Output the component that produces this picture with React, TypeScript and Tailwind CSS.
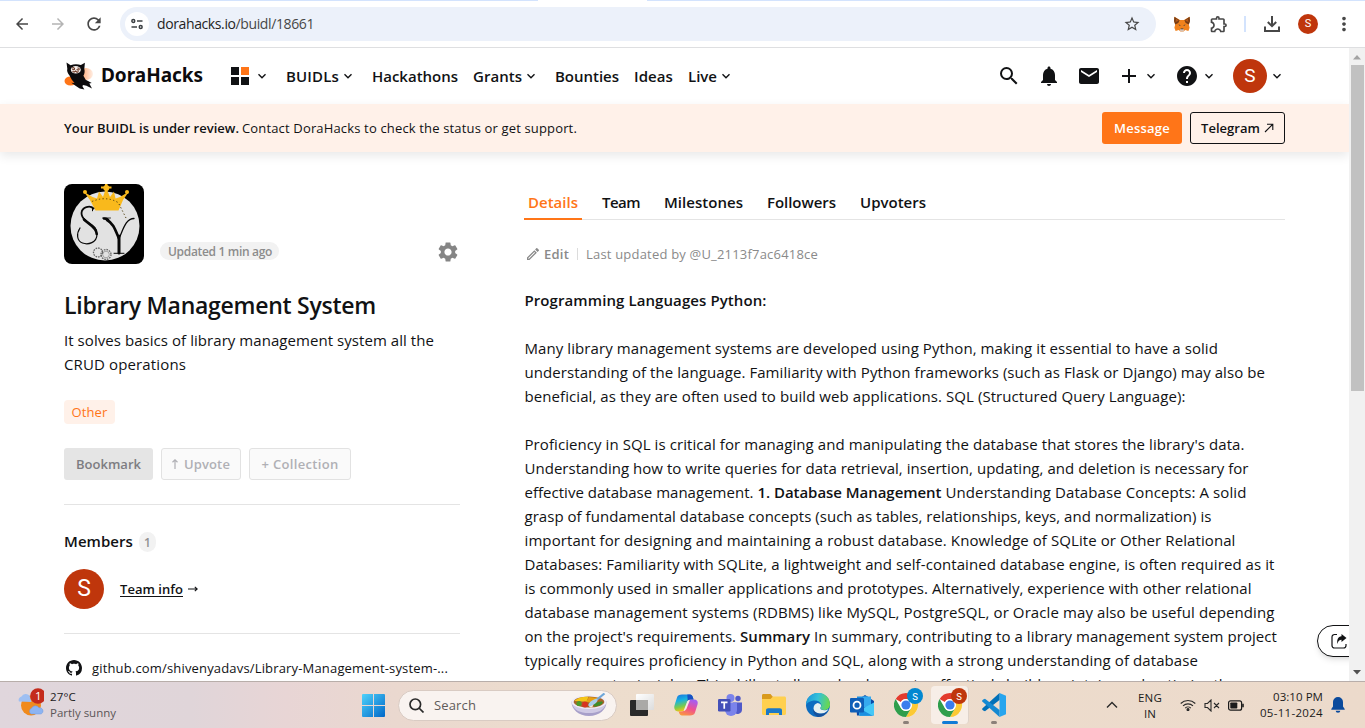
import { useLayoutEffect, useRef, useState } from "react";
import type { ReactNode } from "react";
import {
  MdAdd,
  MdArrowBack,
  MdArrowForward,
  MdHelp,
  MdMail,
  MdMoreVert,
  MdNotifications,
  MdOutlineEdit,
  MdOutlineExtension,
  MdRefresh,
  MdSearch,
  MdSettings,
  MdStarBorder,
} from "react-icons/md";

/* Single line of text, tracked so that it fills the given width. */
function Fit({ w, className = "", children }: { w: number; className?: string; children: ReactNode }) {
  const ref = useRef<HTMLSpanElement>(null);
  const [spacing, setSpacing] = useState(0);
  useLayoutEffect(() => {
    const el = ref.current;
    if (!el) return;
    const count = (el.textContent || "").length;
    setSpacing((w - el.getBoundingClientRect().width) / Math.max(1, count));
  }, [w]);
  return (
    <span className={`block shrink-0 whitespace-nowrap ${className}`} style={{ width: w }}>
      <span ref={ref} className="inline-block" style={{ letterSpacing: `${spacing}px` }}>
        {children}
      </span>
    </span>
  );
}

function Chevron({ className = "" }: { className?: string }) {
  return (
    <svg viewBox="0 0 12 12" className={`size-3 shrink-0 ${className}`} fill="none" stroke="#111214" strokeWidth="1.4">
      <path d="M2.5 4.2 6 7.700l3.500-3.500" />
    </svg>
  );
}

function Avatar({ className }: { className: string }) {
  return (
    <span className={`flex shrink-0 items-center justify-center rounded-full bg-[#bf360c] font-['Roboto',sans-serif] text-white ${className}`}>
      S
    </span>
  );
}

function Fox() {
  return (
    <svg viewBox="0 0 16 16" className="size-4 shrink-0">
      <path d="M.4.8 6 4h4L15.600.8 16 5l-1.200 3.500.8 3.200-1.200 3.200-3.200-.8L9.500 15.500h-3l-1.700-1.400-3.200.8L.4 11.700l.8-3.200L0 5z" fill="#f0821d" />
      <path d="M.4.8 5.600 4.300 4.300 7 1.200 8.500 0 5zM15.600.8l-5.200 3.500L11.700 7l3.100 1.500L16 5z" fill="#763d16" />
      <path d="m2 2.500 2.800 2.200L1.500 6zM14 2.500l-2.800 2.200L14.500 6z" fill="#b5591b" />
      <path d="m4.300 8.200 2.200 1-.5.800zM11.700 8.200l-2.200 1 .5.800z" fill="#233447" />
      <path d="M6.300 13h3.400l.3 1.600-.6.900H6.600l-.6-.9z" fill="#d7c1b3" />
      <path d="M6.800 12.400h2.400l.3.900h-3z" fill="#233447" />
    </svg>
  );
}

function BrowserBar() {
  return (
    <div className="flex h-12 flex-col border-b border-[#dedfe1] bg-white">
      <div className="flex h-px shrink-0 bg-[#d3e3fd] pl-[538px]">
        <div className="w-[109px] bg-white" />
      </div>
      <div className="flex h-[46px] items-center text-[#474747]">
        <MdArrowBack className="ml-[13px] size-[18px]" />
        <MdArrowForward className="ml-[18px] size-[18px] text-[#b4b4b4]" />
        <MdRefresh className="ml-[17px] size-5" />
        <div className="ml-4 flex h-[34px] w-[1036px] items-center rounded-full bg-[#ecf1fa] pl-[5px]">
          <span className="flex size-6 items-center justify-center rounded-full bg-white">
            <svg viewBox="0 0 12 12" className="size-3" fill="none" stroke="#3c4043" strokeWidth="1.500">
              <circle cx="2.300" cy="3" r="1.450" />
              <circle cx="9.700" cy="9" r="1.450" />
              <path d="M6 3h5.500M.5 9H6" />
            </svg>
          </span>
          <Fit w={157} className="ml-2 text-[14px] leading-5 text-[#474747]">
            <span className="text-[#1f1f1f]">dorahacks.io</span>/buidl/18661
          </Fit>
          <MdStarBorder className="ml-auto mr-[15px] size-[18px]" />
        </div>
        <span className="ml-[18px]">
          <Fox />
        </span>
        <MdOutlineExtension className="ml-[19px] size-5" />
        <span className="ml-[15px] h-4 w-0.5 bg-[#d3e3fd]" />
        <svg viewBox="0 0 18 18" className="ml-[17px] size-[18px]" fill="none" stroke="#474747" strokeWidth="2">
          <path d="M9 1v10M4.800 7 9 11.200 13.200 7M2 11.500V16h14v-4.500" />
        </svg>
        <Avatar className="ml-[17px] size-5 text-[11px]" />
        <MdMoreVert className="ml-[15px] size-[22px]" />
      </div>
    </div>
  );
}

function DoraLogo() {
  return (
    <svg viewBox="0 0 30 30" className="size-[30px] shrink-0">
      <defs>
        <linearGradient id="glow" x1="0" x2="1">
          <stop offset="0" stopColor="#ff7a2a" stopOpacity=".75" />
          <stop offset="1" stopColor="#ff7a2a" stopOpacity=".12" />
        </linearGradient>
      </defs>
      <ellipse cx="22" cy="13" rx="7" ry="6" fill="url(#glow)" />
      <ellipse cx="6.500" cy="20" rx="6" ry="4.600" fill="#ff7518" />
      <path d="M2.500 1.500 6.600 4.200c3.300-1.400 7.200-1.400 10.300-.1L20.900 1.700l-.6 6.300c.7 2.200.3 4.700-.9 6.800l2.300 3.900 6 3.300-2.400.6 2.700 4.900-5.500-2.800-3.600-.8-.4 1.700 1.900 3-4.700-1.100-3.800-2.600-4.600-3.100 3.200.1-2.700-3.100-2.300-4.300C3.600 11.800 2.700 10 3.300 7.700z" fill="#0c0b0d" />
      <ellipse cx="11.800" cy="8.800" rx="5" ry="3.700" fill="#f6efec" />
      <path d="M8 7.200c1-1 2.500-.6 2.600.5s-1.600 1.300-2.200.5M13.500 7.300c1-.7 2.300.3 1.500 1.300s-2 .3-2-.5M8.500 10.300l1.500.9 1.700-1.200 1.400 1.300 1.500-.8" fill="none" stroke="#6d3a26" strokeWidth="1.100" />
    </svg>
  );
}

function SiteHeader() {
  const nav = "-mt-px text-[15px] leading-6 font-semibold";
  return (
    <header className="flex h-14 items-center bg-white pl-16 text-[#111214]">
      <DoraLogo />
      <Fit w={102} className="-mt-0.5 ml-[7px] font-['Noto_Sans',sans-serif] text-[19px] leading-6 font-bold text-[#0c0b0d]">
        DoraHacks
      </Fit>
      <span className="ml-7 grid grid-cols-2 gap-0.5">
        <i className="size-2 bg-[#111214]" />
        <i className="size-2 bg-[#ff7518]" />
        <i className="size-2 bg-[#111214]" />
        <i className="size-2 bg-[#111214]" />
      </span>
      <Chevron className="ml-[7px]" />
      <Fit w={53} className={`ml-[18px] ${nav}`}>BUIDLs</Fit>
      <Chevron className="ml-[3px]" />
      <Fit w={86} className={`ml-[18px] ${nav}`}>Hackathons</Fit>
      <Fit w={49} className={`ml-[15px] ${nav}`}>Grants</Fit>
      <Chevron className="ml-[3px]" />
      <Fit w={64} className={`ml-[18px] ${nav}`}>Bounties</Fit>
      <Fit w={39} className={`ml-[15px] ${nav}`}>Ideas</Fit>
      <Fit w={29} className={`ml-[15px] ${nav}`}>Live</Fit>
      <Chevron className="ml-[3px]" />
      <div className="ml-auto flex items-center pr-[66px]">
        <MdSearch className="size-6" />
        <MdNotifications className="ml-4 size-6" />
        <MdMail className="ml-4 size-6" />
        <MdAdd className="ml-4 size-6" />
        <Chevron className="ml-1" />
        <MdHelp className="ml-[18px] size-6" />
        <Chevron className="ml-1" />
        <Avatar className="ml-[18px] size-[34px] text-[19px]" />
        <Chevron className="ml-1" />
      </div>
    </header>
  );
}

function ReviewBanner() {
  return (
    <div className="z-10 flex h-12 items-center bg-[#fff1e9] pl-16 text-[13px] text-[#111214] shadow-[0_4px_10px_rgba(0,0,0,0.09)]">
      <Fit w={175} className="pt-0.5 font-semibold">Your BUIDL is under review.</Fit>
      <Fit w={335} className="ml-[3px] pt-0.5">Contact DoraHacks to check the status or get support.</Fit>
      <div className="ml-auto flex gap-2 pr-16 font-semibold">
        <button className="flex h-8 w-20 items-center justify-center rounded-[3px] bg-[#ff7518] text-white">
          <Fit w={56} className="pt-px font-semibold">Message</Fit>
        </button>
        <button className="flex h-8 w-[95px] items-center justify-center rounded-[3px] border border-[#111214]">
          <Fit w={59} className="pt-px font-semibold">Telegram</Fit>
          <svg viewBox="0 0 10 10" className="ml-1 size-2.5" fill="none" stroke="#111214" strokeWidth="1.100">
            <path d="M1 9 8.500 1.500M3 1.300h5.800V7" />
          </svg>
        </button>
      </div>
    </div>
  );
}

function ProjectLogo() {
  return (
    <svg viewBox="0 0 80 80" className="size-20 rounded-lg">
      <rect width="80" height="80" fill="#000" />
      <circle cx="41" cy="42" r="34.500" fill="#e2e2e2" />
      <path d="M31.500 26.500 26 16 19.500 7.500l9 5.500 4.500 1.500 2-7 4 5.500 2-6V4.500h-4V2.500h4V0h2.500v2.500h4v2h-4V7l2.500 6 4-5.500 1.500 7 4.500-1.500L65 7.500 59 16 54.500 26.500z" fill="#f9b91c" />
      <circle cx="21" cy="8" r="2" fill="#f9b91c" />
      <circle cx="63" cy="8" r="2" fill="#f9b91c" />
      <circle cx="42.300" cy="4" r="3" fill="#f9b91c" />
      <path d="M28 17.500q14-6 26 1M55 20l8 16" fill="none" stroke="#51400f" strokeWidth="1" strokeDasharray="1.300 2.300" />
      <g fill="none" stroke="#080808" strokeLinecap="round">
        <path d="M29.500 24.500C26 21 18 23 17.500 29c0 3 1 5 4 7.500" strokeWidth="1.800" />
        <path d="M19.500 34.500c5 5.500 13.700 7.500 13.500 15.500 0 9-9 11-14.500 9-5.500-2-6.500-9-2.500-15" strokeWidth="1.200" />
        <path d="M20 35.500c5 5 12.700 7.500 12.700 14.500" strokeWidth="2.600" />
        <path d="M28.500 23.300v3.500" strokeWidth="1" />
        <path d="M43 36c6 3 8 9 11.700 18M40 34.500q4 0 5 3" strokeWidth="2.600" />
        <path d="M70 34.500c-8 0-10.500 10-15 20" strokeWidth="1.300" />
        <path d="M55 52v17" strokeWidth="3" />
        <path d="M50 69.300h10" strokeWidth="1" />
        <path d="M38.500 34h8" strokeWidth=".8" />
      </g>
      <g fill="none" stroke="#666" strokeWidth="1.300" strokeDasharray="1.600 1">
        <circle cx="34" cy="68.500" r="4.500" />
        <circle cx="42" cy="70.500" r="5" />
      </g>
      <circle cx="42" cy="70.500" r="3.300" fill="none" stroke="#888" strokeWidth=".7" />
    </svg>
  );
}

function Sidebar() {
  return (
    <aside className="flex w-[396px] shrink-0 flex-col">
      <div className="flex items-end">
        <ProjectLogo />
        <span className="mb-1 ml-4 flex h-[18px] w-[119px] items-center rounded-full bg-[#f2f2f2] pl-2 text-[12px] leading-[18px] font-semibold text-[#8c8c8c]">
          <Fit w={104} className="pt-0.5">Updated 1 min ago</Fit>
        </span>
        <MdSettings className="ml-auto size-6 text-[#858585]" />
      </div>
      <h1 className="mt-[23px] h-9 text-[23px] leading-9 font-semibold">
        <Fit w={312}>Library Management System</Fit>
      </h1>
      <div className="mt-[5px] text-[15px] leading-6">
        <Fit w={370}>It solves basics of library management system all the</Fit>
        <Fit w={122}>CRUD operations</Fit>
      </div>
      <span className="mt-6 flex h-6 w-[51px] items-center justify-center rounded bg-[#fff1e9] text-[13px] text-[#ff7518]">
        <Fit w={36} className="pt-px">Other</Fit>
      </span>
      <div className="mt-6 flex gap-2 text-[13px] font-semibold">
        <span className="flex h-8 w-[89px] items-center justify-center rounded-[3px] bg-[#e5e5e5] text-[#7d7d82]">
          <Fit w={65} className="pt-0.5">Bookmark</Fit>
        </span>
        <span className="flex h-8 w-20 items-center justify-center rounded-[3px] border border-[#e2e2e2] bg-[#fafafa] text-[#b0b0b5]">
          <svg viewBox="0 0 6 10" className="mr-1.5 h-2.5 w-1.5" fill="none" stroke="#b0b0b5" strokeWidth="1.200">
            <path d="M3 10V1M.5 3.200 3 .8l2.500 2.400" />
          </svg>
          <Fit w={46} className="pt-0.5">Upvote</Fit>
        </span>
        <span className="flex h-8 w-[102px] items-center justify-center rounded-[3px] border border-[#e2e2e2] bg-[#fafafa] text-[#b0b0b5]">
          <Fit w={77} className="pt-0.5">+ Collection</Fit>
        </span>
      </div>
      <hr className="mt-6 border-[#e4e4e4]" />
      <div className="mt-[27px] flex h-5 items-center">
        <Fit w={69} className="-mt-0.5 text-[15px] font-semibold">Members</Fit>
        <span className="ml-1.5 flex h-5 w-[17px] items-center justify-center rounded-full bg-[#f2f2f2] pt-px text-[12px] font-semibold text-[#909090]">1</span>
      </div>
      <div className="mt-[17px] flex items-center">
        <Avatar className="size-10 text-[23px]" />
        <Fit w={63} className="ml-4 text-[13px] leading-5 font-semibold">
          <span className="underline decoration-1 underline-offset-2">Team info</span>
        </Fit>
        <svg viewBox="0 0 10 6" className="ml-[5px] h-1.5 w-2.5 shrink-0" fill="none" stroke="#111214" strokeWidth="1.100">
          <path d="M0 3h9M6.800.8 9.200 3 6.800 5.200" />
        </svg>
      </div>
      <hr className="mt-6 border-[#e4e4e4]" />
      <div className="mt-6 flex items-center pl-0.5">
        <svg viewBox="0 0 16 16" className="size-4 shrink-0" fill="#111214">
          <path d="M8 0C3.580 0 0 3.580 0 8c0 3.540 2.290 6.530 5.470 7.590.4.070.55-.17.55-.38 0-.19-.01-.82-.01-1.490-2.010.37-2.530-.49-2.690-.94-.09-.23-.48-.94-.82-1.130-.28-.15-.68-.52-.01-.53.63-.01 1.080.58 1.230.82.72 1.210 1.870.87 2.330.66.07-.52.28-.87.51-1.070-1.780-.2-3.640-.89-3.640-3.950 0-.87.31-1.590.82-2.150-.08-.2-.36-1.020.08-2.120 0 0 .67-.21 2.200.82.64-.18 1.320-.27 2-.27s1.360.09 2 .27c1.530-1.040 2.200-.82 2.200-.82.44 1.100.16 1.920.08 2.120.51.56.82 1.270.82 2.150 0 3.070-1.870 3.750-3.650 3.950.29.25.54.73.54 1.480 0 1.070-.01 1.930-.01 2.200 0 .21.15.46.55.38A8.010 8.010 0 0016 8c0-4.420-3.580-8-8-8z" />
        </svg>
        <Fit w={356} className="ml-2.5 text-[13px] leading-5">
          github.com/shivenyadavs/Library-Management-system-...
        </Fit>
      </div>
    </aside>
  );
}

const TABS = [
  { label: "Team", w: 38, gap: "ml-[15px]" },
  { label: "Milestones", w: 79, gap: "ml-3.5" },
  { label: "Followers", w: 69, gap: "ml-3.5" },
  { label: "Upvoters", w: 66, gap: "ml-3.5" },
];

function Details() {
  return (
    <main className="ml-16 w-[761px] shrink-0">
      <div className="flex h-9 border-b border-[#e4e4e4] text-[15px] leading-6 font-semibold">
        <span className="z-10 h-9 w-[58px] border-b-2 border-[#ff7518] px-1 pt-1.5 text-[#ff7518]">
          <Fit w={50}>Details</Fit>
        </span>
        {TABS.map((t) => (
          <span key={t.label} className={`px-[5px] pt-1.5 ${t.gap}`}>
            <Fit w={t.w}>{t.label}</Fit>
          </span>
        ))}
      </div>
      <div className="mt-6 flex h-5 items-center text-[13px] leading-5 text-[#8a8a8a]">
        <MdOutlineEdit className="ml-[1px] size-4" />
        <Fit w={25} className="ml-[3px] font-semibold">Edit</Fit>
        <span className="ml-2 h-3 w-px bg-[#dcdcdc]" />
        <Fit w={232} className="ml-2">Last updated by @U_2113f7ac6418ce</Fit>
      </div>
      <div className="mt-6 pl-[0.5px] text-[15px] leading-6">
        <Fit w={242} className="font-semibold">Programming Languages Python:</Fit>
        <div className="mt-6">
          <Fit w={693.5}>Many library management systems are developed using Python, making it essential to have a solid</Fit>
          <Fit w={740.5}>understanding of the language. Familiarity with Python frameworks (such as Flask or Django) may also be</Fit>
          <Fit w={661}>beneficial, as they are often used to build web applications. SQL (Structured Query Language):</Fit>
        </div>
        <div className="mt-6">
          <Fit w={720}>Proficiency in SQL is critical for managing and manipulating the database that stores the library's data.</Fit>
          <Fit w={724}>Understanding how to write queries for data retrieval, insertion, updating, and deletion is necessary for</Fit>
          <div className="flex">
            <Fit w={229}>effective database management.</Fit>
            <Fit w={184} className="ml-1 font-semibold">1. Database Management</Fit>
            <Fit w={301} className="ml-1">Understanding Database Concepts: A solid</Fit>
          </div>
          <Fit w={687}>grasp of fundamental database concepts (such as tables, relationships, keys, and normalization) is</Fit>
          <Fit w={711}>important for designing and maintaining a robust database. Knowledge of SQLite or Other Relational</Fit>
          <Fit w={750}>Databases: Familiarity with SQLite, a lightweight and self-contained database engine, is often required as it</Fit>
          <Fit w={727}>is commonly used in smaller applications and prototypes. Alternatively, experience with other relational</Fit>
          <Fit w={750}>database management systems (RDBMS) like MySQL, PostgreSQL, or Oracle may also be useful depending</Fit>
          <div className="flex">
            <Fit w={211.5}>on the project's requirements.</Fit>
            <Fit w={70} className="ml-1 font-semibold">Summary</Fit>
            <Fit w={463} className="ml-1">In summary, contributing to a library management system project</Fit>
          </div>
          <Fit w={673.5}>typically requires proficiency in Python and SQL, along with a strong understanding of database</Fit>
          <Fit w={712}>management principles. This skill set allows developers to effectively build, maintain, and optimize the</Fit>
        </div>
      </div>
    </main>
  );
}

function ScrollTrack() {
  return (
    <div className="flex w-4 shrink-0 flex-col items-center bg-[#f1f1f1]">
      <svg viewBox="0 0 16 17" className="h-[17px] w-4" fill="#a3a3a3">
        <path d="M8 7l4 4.500H4z" />
      </svg>
      <div className="ml-px h-[326px] w-[13px] bg-[#c1c1c1]" />
      <svg viewBox="0 0 16 17" className="mt-auto h-[17px] w-4" fill="#505050">
        <path d="M8 10.500 4 6h8z" />
      </svg>
    </div>
  );
}

function Bowl() {
  return (
    <svg viewBox="0 0 36 24" className="h-6 w-9">
      <path d="M.5 8.500c0 8 7 14.500 17.500 14.500S35.500 16.500 35.500 8.500z" fill="#a79fc9" />
      <path d="M1 10.500c2 7 8 9.500 17 9.500s15-2.500 17-9.500z" fill="#cfc9e4" />
      <ellipse cx="18" cy="9" rx="17.500" ry="7" fill="#efecf7" />
      <ellipse cx="18" cy="9" rx="15.300" ry="5.500" fill="#a8642a" />
      <path d="M3.500 8c2-3 8-4.500 14-4.300l-2 5z" fill="#f5c518" />
      <path d="M15 9 18 4l9 1-2 5z" fill="#e8a012" />
      <circle cx="8" cy="10.500" r="2.600" fill="#4d9a2a" />
      <circle cx="14" cy="11.500" r="2.900" fill="#d8331f" />
      <path d="M23 11c3-2 6-3 9-2-1 3-5 4.500-9 4.500z" fill="#3f8c2b" />
      <circle cx="20" cy="12.500" r="2" fill="#f6ead2" />
      <path d="M33.500.5 26 6.500" stroke="#6fa6d8" strokeWidth="2.200" />
      <ellipse cx="22" cy="9.500" rx="5.500" ry="2.200" transform="rotate(-35 22 9.500)" fill="#a9cdec" />
    </svg>
  );
}

function ChromeIcon({ badge }: { badge: "blue" | "red" }) {
  return (
    <svg viewBox="0 0 30 30" className="-mt-[5px] -mr-[6px] size-[30px] shrink-0">
      <circle cx="12" cy="17" r="12" fill="#fff" />
      <path d="M1.600 11A12 12 0 0 1 22.400 11H12a6 6 0 0 0-5.200 3z" fill="#e33b2e" />
      <path d="M22.400 11A12 12 0 0 1 12 29l5.200-9A6 6 0 0 0 17.200 14L12 11z" fill="#fcc934" />
      <path d="M12 29A12 12 0 0 1 1.600 11l5.200 9a6 6 0 0 0 10.400 0z" fill="#2f9e4b" />
      <circle cx="12" cy="17" r="5.900" fill="#fff" />
      <circle cx="12" cy="17" r="4.600" fill="#3b7ded" />
      <circle cx="21" cy="8" r="8" fill={badge === "blue" ? "#0288d1" : "#bf360c"} />
      <text x="21" y="11.500" textAnchor="middle" fontSize="9.500" fill="#fff" fontFamily="Roboto, sans-serif">
        S
      </text>
    </svg>
  );
}

function TaskIcons() {
  return (
    <div className="ml-[13px] flex items-center gap-5">
      <svg viewBox="0 0 24 24" className="size-6">
        <defs>
          <linearGradient id="tvw" x1="0" y1="0" x2="1" y2="1">
            <stop offset="0" stopColor="#fff" />
            <stop offset="1" stopColor="#dcdcdc" />
          </linearGradient>
        </defs>
        <rect x="6" y="1" width="18" height="16" rx="1" fill="url(#tvw)" />
        <rect x="0" y="7" width="18" height="16" rx="1" fill="#292929" />
        <path d="M6 7h12v10H6z" fill="#aaa9a7" />
      </svg>
      <svg viewBox="0 0 24 24" className="size-6">
        <defs>
          <linearGradient id="cpa" x1="0" y1="0" x2=".3" y2="1">
            <stop offset="0" stopColor="#1c6fe0" />
            <stop offset=".4" stopColor="#18b3e0" />
            <stop offset=".75" stopColor="#7ccb4a" />
            <stop offset="1" stopColor="#f3c516" />
          </linearGradient>
          <linearGradient id="cpb" x1=".6" y1="0" x2=".2" y2="1">
            <stop offset="0" stopColor="#a65cf0" />
            <stop offset=".5" stopColor="#f0508f" />
            <stop offset="1" stopColor="#fb9a3c" />
          </linearGradient>
        </defs>
        <path d="M8 1.500h8c1.500 0 2.300 1 2.800 2.500l.8 2.500h-3c-2 0-2.900 1-3.500 3l-2 6c-.6 2-1.500 3-3.500 3H4C.8 18.500-.3 15.500.5 12.500l2.500-8C3.700 2.300 5.400 1.500 8 1.500z" fill="url(#cpa)" />
        <path d="M16 22.500H8c-1.500 0-2.300-1-2.800-2.500l-.5-1.500h3c2 0 2.900-1 3.500-3l2-6c.6-2 1.500-3 3.500-3H20c3.200 0 4.300 2 3.500 5l-2.500 8c-.7 2.200-2.400 3-5 3z" fill="url(#cpb)" />
        <path d="M13.300 1.500H16c1.500 0 2.300 1 2.800 2.500l.8 2.500h-3c-1.400 0-2.300.5-2.900 1.500z" fill="#1a50c4" />
        <path d="m13.200 8.500 1.500-1.500h1.200l-3.500 9-1.600 1.800H9.600z" fill="#f5ebe5" />
      </svg>
      <svg viewBox="0 0 24 24" className="size-6">
        <circle cx="12.500" cy="5" r="4" fill="#7b83eb" />
        <circle cx="20" cy="5.500" r="2.700" fill="#5059c9" />
        <path d="M15 9.500h9v7a4.500 4.500 0 0 1-8 2.800z" fill="#5059c9" />
        <path d="M7 9.500h12v7.500a6 6 0 0 1-12 0z" fill="#7b83eb" />
        <rect x="0" y="6" width="12.500" height="12.500" rx="1.200" fill="#4450b8" />
        <path d="M3 9.300h6.500M6.250 9.300v6.500" stroke="#fff" strokeWidth="1.700" />
      </svg>
      <svg viewBox="0 0 24 24" className="size-6">
        <path d="M0 2.500C0 1.500.6 1 1.500 1h7L11 4v4H0z" fill="#d99a1c" />
        <path d="M0 6h8.500L11 3.500h11.500c.9 0 1.500.6 1.500 1.500v15.500c0 .9-.6 1.500-1.500 1.500h-21C.6 22 0 21.400 0 20.500z" fill="#ffd04f" />
        <path d="M4 22v-4.500c0-1.500.8-2.300 2.300-2.300h11.400c1.500 0 2.300.8 2.300 2.300V22h-3v-2H7v2z" fill="#1b78c8" />
      </svg>
      <svg viewBox="0 0 24 24" className="size-6">
        <defs>
          <linearGradient id="edg" x1="0" y1=".2" x2="1" y2=".4">
            <stop offset="0" stopColor="#1997dc" />
            <stop offset=".5" stopColor="#35c1d8" />
            <stop offset="1" stopColor="#69d84f" />
          </linearGradient>
        </defs>
        <circle cx="12" cy="12" r="12" fill="#0d6cc0" />
        <path d="M0 12A12 12 0 0 1 24 11.500c0 3.500-2.800 5.500-6 5.500-2.500 0-4-1-3.700-2.300.9-.8 1.200-1.900 1-3C14.600 8.500 11 7 7.500 7.500 3.500 8 .8 10 0 12z" fill="url(#edg)" />
        <path d="M7.500 15.500c0-3 1.700-5 4.200-5.500 2 .3 3.700 1.500 3.400 3.200-.2 1-.9 1.200-.9 1.800 0 1.500 2 2.200 4 2.200 1.800 0 3.200-.6 4.300-1.300-1.300 2.600-3.700 4.600-7 4.600-4.500 0-8-2-8-5z" fill="#e8f0f0" />
        <path d="M7.500 15.500c.2 3.200 3.200 5.300 7.500 5.300 3 0 5.500-1.500 7-3.300A12 12 0 0 1 12 24C8.500 22.500 6.500 19.500 7.500 15.500z" fill="#17519c" />
      </svg>
      <svg viewBox="0 0 24 24" className="size-6">
        <path d="M6 8 15 2l9 6v13c0 1-.6 1.500-1.500 1.500H7z" fill="#0a4aa6" />
        <path d="M7 3.500h11V14H7z" fill="#1a8fe0" />
        <path d="M13 3.500h8v11h-8z" fill="#36a9ee" />
        <path d="m24 9.500-15 8v4c0 .9.500 1.300 1.500 1.300h12c.9 0 1.500-.5 1.500-1.500z" fill="#45c8f7" />
        <path d="m9 15 13.500 7.800H9.500z" fill="#1a8fe0" />
        <rect x="0" y="5" width="14" height="14.500" rx="1" fill="#0f5fb8" />
        <circle cx="7" cy="12.200" r="3.500" fill="none" stroke="#fff" strokeWidth="1.800" />
      </svg>
      <div className="relative size-6">
        <ChromeIcon badge="blue" />
        <span className="absolute top-[28px] left-[9px] h-[3px] w-1.5 rounded-full bg-[#8b8079]" />
      </div>
      <div className="relative size-6">
        <span className="absolute -top-[7px] -left-[7px] h-[38px] w-[38px] rounded border-r border-[#dfd3c9] bg-[#f7eee7]" />
        <span className="relative block">
          <ChromeIcon badge="red" />
        </span>
        <span className="absolute top-[28px] left-1 h-[3px] w-4 rounded-full bg-[#0f7bd6]" />
      </div>
      <div className="relative size-6">
        <svg viewBox="0 0 24 24" className="size-6">
          <path d="M17.500 0 24 2.800v18.400L17.500 24z" fill="#27a5ee" />
          <path d="M17.500 0v7L3 18.300 1.200 17.500 0 16.200 .3 15.500z" fill="#0070b8" />
          <path d="M17.500 24v-7L3 5.700 1.200 6.500 0 7.800l.3.700z" fill="#1489d2" />
        </svg>
        <span className="absolute top-[28px] left-[9px] h-[3px] w-1.5 rounded-full bg-[#8b8079]" />
      </div>
    </div>
  );
}

function Taskbar() {
  return (
    <footer className="flex h-[47px] items-center border-t border-[#b8aeaa] bg-[linear-gradient(90deg,#e0d6dc_0%,#e0d5d9_14%,#e8d5d5_21%,#ead8cf_29%,#edddcd_42%,#ecdacb_100%)] text-[12px] text-[#1b1b1b]">
      <svg viewBox="0 0 26 28" className="-mt-[7px] ml-[18px] h-7 w-[26px] shrink-0">
        <circle cx="13" cy="17.500" r="10" fill="#f08a1c" />
        <path d="M1 13.500a3.500 3.500 0 0 1 2.500-5 5 5 0 0 1 8-1l2 6.500z" fill="#9ebff2" />
        <path d="M13 26a3.300 3.300 0 0 1 .5-5.800 4.300 4.300 0 0 1 7.500-.4 3.300 3.300 0 0 1 3.500 5c-.7 1-1.500 1.200-2.500 1.200z" fill="#8db4f2" stroke="#6f98de" strokeWidth=".5" />
        <circle cx="20" cy="8" r="7.800" fill="#c42b1c" />
        <text x="20.300" y="12" textAnchor="middle" fontSize="11.500" fill="#fff" fontFamily="Open Sans, sans-serif">
          1
        </text>
      </svg>
      <div className="ml-1.5 text-[11.500px] leading-4">
        <Fit w={26}>27°C</Fit>
        <Fit w={66} className="text-[#5b5557]">Partly sunny</Fit>
      </div>
      <svg viewBox="0 0 23 23" className="ml-[246px] size-[23px] shrink-0">
        <defs>
          <linearGradient id="win" x1="0" y1="0" x2="1" y2="1">
            <stop offset="0" stopColor="#4fd2fb" />
            <stop offset="1" stopColor="#0067c8" />
          </linearGradient>
        </defs>
        <path d="M0 1q0-1 1-1h10v11H0zM12 0h10q1 0 1 1v10H12zM0 12h11v11H1q-1 0-1-1zM12 12h11v10q0 1-1 1H12z" fill="url(#win)" />
      </svg>
      <div className="ml-[13px] flex h-[31px] w-[219px] shrink-0 items-center rounded-full border border-[#d9cbc3] bg-[#f9f3f0] pr-[9px] pl-2.5">
        <svg viewBox="0 0 15 15" className="size-[15px]" fill="none" stroke="#2a2a2a" strokeWidth="1.700">
          <circle cx="6.300" cy="6.300" r="5.300" />
          <path d="m10 10 4.500 4.500" />
        </svg>
        <Fit w={42} className="ml-2.5 pt-0.5 text-[13px] text-[#5f5b5a]">Search</Fit>
        <span className="ml-auto">
          <Bowl />
        </span>
      </div>
      <TaskIcons />
      <div className="ml-auto flex items-center pr-[20px]">
        <svg viewBox="0 0 12 8" className="h-2 w-3" fill="none" stroke="#2a2a2a" strokeWidth="1.400">
          <path d="m1 6.500 5-5 5 5" />
        </svg>
        <div className="ml-5 flex flex-col items-center pt-px leading-4">
          <Fit w={24} className="text-[11.500px]">ENG</Fit>
          <Fit w={12} className="text-[11.500px]">IN</Fit>
        </div>
        <svg viewBox="0 0 16 12" className="ml-[18px] h-3 w-4" fill="none" stroke="#2a2a2a" strokeWidth="1.100">
          <path d="M.7 4.500a10.500 10.500 0 0 1 14.600 0M3 6.900a7.200 7.200 0 0 1 10 0M5.200 9.100a4 4 0 0 1 5.600 0" />
          <circle cx="8" cy="10.600" r="1" fill="#2a2a2a" />
        </svg>
        <svg viewBox="0 0 16 13" className="ml-2 h-[13px] w-4" fill="none" stroke="#2a2a2a" strokeWidth="1.100">
          <path d="M1 4.500h2.500L7 1v11L3.500 8.500H1zM10 4l5 5M15 4l-5 5" />
        </svg>
        <svg viewBox="0 0 16 11" className="ml-2 h-[11px] w-4">
          <rect x=".6" y=".8" width="13" height="9.400" rx="2" fill="none" stroke="#1b1b1b" strokeWidth="1.200" />
          <rect x="2.300" y="2.500" width="7" height="6" rx=".8" fill="#1b1b1b" />
          <path d="M14.200 3.800h1.600v3.400h-1.600z" fill="#1b1b1b" />
        </svg>
        <div className="ml-4 flex w-[63px] flex-col items-end text-[11.500px] leading-4">
          <Fit w={50}>03:10 PM</Fit>
          <Fit w={63}>05-11-2024</Fit>
        </div>
        <svg viewBox="0 0 14 16" className="ml-2 h-4 w-3.5" fill="#0a4a9c">
          <path d="M7 0a5 5 0 0 1 5 5v4.500l1.700 2.500v.8H.3V12L2 9.500V5a5 5 0 0 1 5-5zM4.700 13.700h4.600a2.300 2 0 0 1-4.600 0z" />
        </svg>
      </div>
    </footer>
  );
}

export default function App() {
  return (
    <div className="flex h-[728px] w-[1365px] flex-col overflow-hidden bg-white font-['Open_Sans',sans-serif] text-[#111214]">
      <BrowserBar />
      <div className="flex h-[633px]">
        <div className="relative flex w-[1349px] shrink-0 flex-col overflow-hidden">
          <SiteHeader />
          <ReviewBanner />
          <div className="flex h-[529px] overflow-hidden pt-8 pl-16">
            <Sidebar />
            <Details />
          </div>
          <div className="absolute top-[577px] left-[1317px] flex h-8 w-12 items-center rounded-full border border-[#111214] bg-white pl-[13px] shadow-md">
            <svg viewBox="0 0 16 16" className="size-4 shrink-0" fill="none" stroke="#111214" strokeWidth="1.200">
              <path d="M6 1.500H3.500a2.500 2.500 0 0 0-2.500 2.500v8.500a2.500 2.500 0 0 0 2.500 2.500h9a2.500 2.500 0 0 0 2.500-2.500V11" />
              <path d="M10.500 1 15.500 5l-5 4V6.800c-2 0-3.500 1-4 4.200-1-4 .5-7.500 4-7.800z" fill="#111214" stroke="none" />
            </svg>
          </div>
        </div>
        <ScrollTrack />
      </div>
      <Taskbar />
    </div>
  );
}
